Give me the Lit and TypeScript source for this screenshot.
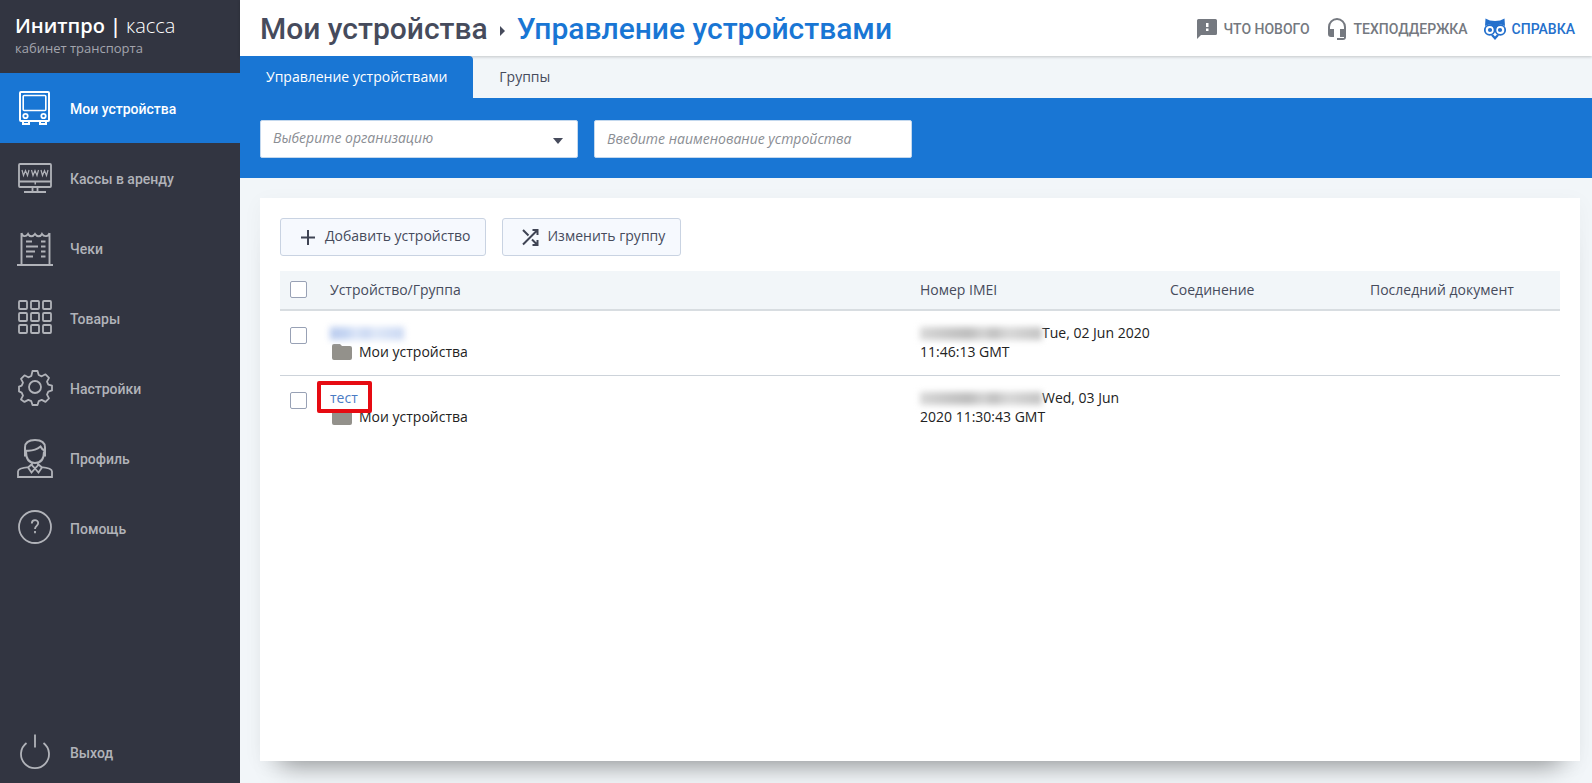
import { LitElement, html, css, svg } from "lit";
import { customElement } from "lit/decorators.js";
import { classMap } from "lit/directives/class-map.js";

const icons: Record<string, unknown> = {
  bus: svg`<rect x="4" y="4" width="29" height="29" rx="1" stroke-width="2"/><rect x="7.200" y="7.500" width="22.600" height="15" rx="1" stroke-width="1.600"/><circle cx="9.500" cy="28" r="2.200"/><circle cx="27.500" cy="28" r="2.200"/><path d="M7 33v3h6v-3M24 33v3h6v-3" stroke-width="2"/>`,
  rent: svg`<rect x="3" y="6" width="32" height="23" rx="1"/><path d="M3 23.500h32M16.500 29v4.500M21.500 29v4.500M8 34h22M18.500 25.500h1.500"/><path d="M6 12l1.500 5.500 2-5 2 5 1.500-5.500M15.500 12l1.500 5.500 2-5 2 5 1.500-5.500M25 12l1.500 5.500 2-5 2 5L32 12" stroke-width="1.200"/>`,
  check: svg`<path d="M1 37h36M5.500 37V5M33.500 37V5M5.500 5c1 4 4.500 4 6.500 1 1.500 3 5 3 7 0 2 3 5.500 3 7 0 2 3 6.500 3 7.500-1" stroke-width="1.900"/><path d="M10 13.500h6M25 13.500h4.500M10 18.500h12M25 18.500h4.500M10 23.500h9M25 23.500h4.500M10 28.500h7M25 28.500h4.500" stroke-width="1.800"/>`,
  goods: svg`${[3, 15, 27].map((x) => [3, 15, 27].map((y) => svg`<rect x=${x} y=${y} width="8" height="8" rx="1"/>`))}`,
  gear: svg`<circle cx="19" cy="19" r="6"/><path d="M16.500 3h5l1.200 4 3 1.300 3.800-2 3.500 3.500-2 3.800 1.300 3 3.700 1v4.800l-3.700 1.200-1.300 3 2 3.800-3.500 3.500-3.800-2-3 1.300-1.200 3.800h-5l-1.200-3.800-3-1.300-3.800 2L5 31.400l2-3.800-1.300-3L3 23.400v-4.800l2.700-1 1.300-3-2-3.800L8.500 7.300l3.800 2 3-1.300z" stroke-linejoin="round"/>`,
  profile: svg`<path d="M9 18.500V9.500Q9 2 19 2t10 7.500v9M9.500 12.500q9 1 15-4 1.500 3 4 4M10 13.500Q10 25 19 25t9-11.500" stroke-width="2"/><path d="M16 24.500v3l3 3 3-3v-3M15.500 26.500L12 29.500l3.500 5 3.500-4 3.500 4 3.500-5-3.500-3M13 29.200Q2 30 2 33.500V39h34v-5.500q0-3.500-11-4.300"/>`,
  help: svg`<circle cx="19" cy="19" r="16"/><path d="M15.800 15.500c0-4.600 6.400-4.200 6.400-.5 0 2.800-3.200 3-3.200 6M19 23v2.200" stroke-width="1.800"/>`,
  power: svg`<path d="M19 2.500v13M10.500 11a14 14 0 1 0 17 0"/>`,
};

const menu = [
  ["bus", "Мои устройства"],
  ["rent", "Кассы в аренду"],
  ["check", "Чеки"],
  ["goods", "Товары"],
  ["gear", "Настройки"],
  ["profile", "Профиль"],
  ["help", "Помощь"],
];

const devices = [
  { name: "", group: "Мои устройства", date: "Tue, 02 Jun 2020 11:46:13 GMT", marked: false },
  { name: "тест", group: "Мои устройства", date: "Wed, 03 Jun 2020 11:30:43 GMT", marked: true },
];

@customElement("side-menu")
export class SideMenu extends LitElement {
  static styles = css`
    :host { display: flex; flex-direction: column; background: #323541; color: #b1b3b9; }
    .brand { box-sizing: border-box; height: 73px; padding: 14px 15px; }
    .name { display: flex; gap: 5px; color: #fff; font: 300 20px/24px "Open Sans", sans-serif; }
    .name b { font-weight: 600; }
    .sub { font: 13px/20px "Open Sans", sans-serif; color: #a3a5ae; }
    nav { display: flex; flex-direction: column; flex: 1; }
    .item { display: flex; align-items: center; gap: 16px; height: 70px; padding-left: 16px; color: inherit; text-decoration: none; font: 500 14px/20px Roboto, sans-serif; }
    .item span { padding-top: 2px; }
    .active { background: #1976d4; color: #fff; }
    .exit { margin-top: auto; height: 62px; }
    svg { width: 38px; height: 40px; fill: none; stroke: currentColor; stroke-width: 1.8; }
  `;
  private item(icon: string, label: string, extra: Record<string, boolean>) {
    return html`<a href="#" class=${classMap({ item: true, ...extra })}>
      <svg viewBox="0 0 38 40" aria-hidden="true">${icons[icon]}</svg><span>${label}</span></a>`;
  }
  render() {
    return html`
      <div class="brand">
        <div class="name"><b>Инитпро</b><b>|</b><span>касса</span></div>
        <div class="sub">кабинет транспорта</div>
      </div>
      <nav>
        ${menu.map(([icon, label], i) => this.item(icon, label, { active: i === 0 }))}
        ${this.item("power", "Выход", { exit: true })}
      </nav>`;
  }
}

@customElement("device-table")
export class DeviceTable extends LitElement {
  static styles = css`
    :host { display: block; color: #222; font: 14px/19px "Open Sans", sans-serif; }
    table { width: 100%; border-collapse: separate; border-spacing: 0; table-layout: fixed; }
    th { height: 36px; padding: 0 10px 2px; text-align: left; font-weight: 400; color: #464b5c; background: #f2f6f9; border-bottom: 2px solid #d8dde1; }
    td { padding: 12px 10px 13px; vertical-align: top; }
    tr + tr td { border-top: 1px solid #cdd3da; }
    .c-check { width: 20px; }
    .c-imei { width: 230px; }
    .c-link, .c-doc { width: 180px; }
    input { appearance: none; display: block; box-sizing: border-box; width: 17px; height: 17px; margin: 0; border: 1px solid #98a1b5; border-radius: 2px; background: #fff; }
    td input { margin-top: 4px; }
    .title { position: relative; height: 19px; }
    a { color: #4a7bc4; text-decoration: none; }
    .mark { position: absolute; left: -13px; top: -7px; width: 47px; height: 24px; border: 4px solid #e60b12; border-radius: 2px; }
    .group { display: flex; align-items: center; gap: 7px; line-height: 20px; }
    .group svg { width: 20px; height: 16px; margin-left: 2px; fill: #93918b; }
    .hidden { display: inline-block; vertical-align: -2px; height: 13px; filter: blur(3px); }
    .hidden-name { width: 74px; background: linear-gradient(90deg, #b9cbee, #c6d6f3 24%, #dce6f8 34%, #cbd9f3 50%, #dfe8f8 60%, #cbd9f3); }
    .hidden-imei { width: 122px; background: linear-gradient(90deg, #d8d8d8, #c9c9c9 20%, #bdbdbd 40%, #d4d4d4 52%, #c0c0c0 60%, #d8d8d8 72%, #c4c4c4); }
  `;
  render() {
    return html`<table>
      <thead><tr>
        <th class="c-check"><input type="checkbox" aria-label="Выбрать все" /></th>
        <th>Устройство/Группа</th>
        <th class="c-imei">Номер IMEI</th>
        <th class="c-link">Соединение</th>
        <th class="c-doc">Последний документ</th>
      </tr></thead>
      <tbody>${devices.map((d) => html`<tr>
        <td><input type="checkbox" aria-label="Выбрать устройство" /></td>
        <td>
          <div class="title">
            <a href="#">${d.name || html`<span class="hidden hidden-name"></span>`}</a>
            ${d.marked ? html`<span class="mark"></span>` : ""}
          </div>
          <div class="group"><svg viewBox="0 0 20 16" aria-hidden="true"><path d="M2 0h6l2 2h8q2 0 2 2v10q0 2-2 2H2q-2 0-2-2V2q0-2 2-2z"/></svg>${d.group}</div>
        </td>
        <td><span class="hidden hidden-imei"></span>${d.date}</td>
        <td></td><td></td>
      </tr>`)}</tbody>
    </table>`;
  }
}

@customElement("app-root")
export class AppRoot extends LitElement {
  static styles = css`
    :host { display: grid; grid-template-columns: 240px minmax(0, 1fr); min-height: 100vh; background: #f2f6f9; font: 14px/20px "Open Sans", sans-serif; color: #464b5c; }
    main { display: flex; flex-direction: column; }
    header { display: flex; align-items: center; justify-content: space-between; box-sizing: border-box; height: 56px; padding: 2px 17px 0 20px; background: #fff; box-shadow: 0 1px 3px #0003; }
    h1 { display: flex; align-items: center; gap: 12px; margin: 0; font: 500 30px/36px Roboto, sans-serif; }
    h1 a { color: #1976d4; text-decoration: none; }
    .chevron { width: 5px; height: 10px; fill: #464b5c; margin-top: 4px; }
    .links { display: flex; gap: 16px; }
    .links a { display: flex; align-items: center; gap: 6px; color: #757980; text-decoration: none; font: 500 14px/24px Roboto, sans-serif; }
    .links a.help { color: #2470cc; }
    .links svg { width: 22px; height: 24px; fill: currentColor; }
    .tabs { position: relative; display: flex; height: 42px; }
    .tab { border: 0; padding: 0 26px; background: none; font: inherit; color: inherit; }
    .current { background: #1976d4; color: #fff; border-radius: 0 4px 0 0; }
    .filters { display: flex; gap: 16px; padding: 22px 20px 20px; background: #1976d4; }
    .field { box-sizing: border-box; flex: 0 1 318px; min-width: 0; height: 38px; padding: 0 12px 2px; border: 1px solid #c3d8ee; border-radius: 2px; background: #fff; color: #8a8d93; font: italic 14px/20px "Open Sans", sans-serif; appearance: none; }
    .field::placeholder { color: #8a8d93; opacity: 1; }
    .select { display: grid; flex: 0 1 318px; align-items: center; }
    .select > * { grid-area: 1 / 1; }
    .select svg { width: 10px; height: 6px; justify-self: end; margin: 3px 15px 0 0; fill: #464b5c; pointer-events: none; }
    .card { flex: 1; margin: 20px 12px 22px 20px; padding: 20px; background: #fff; box-shadow: 0 24px 24px -20px #0006, 0 4px 20px #0000000a; }
    .actions { display: flex; gap: 16px; margin-bottom: 15px; }
    .action { display: flex; align-items: center; gap: 7px; height: 38px; padding: 0 15px 2px 17px; border: 1px solid #c9d3e2; border-radius: 3px; background: #f6f9fe; color: #464b5c; font: inherit; }
    .action svg { width: 20px; height: 20px; margin-top: 2px; fill: none; stroke: #3f4454; stroke-width: 2; }
  `;
  render() {
    return html`
      <side-menu></side-menu>
      <main>
        <header>
          <h1>Мои устройства <svg class="chevron" viewBox="0 0 5 10"><path d="M0 0l5 5-5 5z"/></svg> <a href="#">Управление устройствами</a></h1>
          <div class="links">
            <a href="#"><svg viewBox="0 0 22 24"><path fill-rule="evenodd" d="M2.500 2h17q1.500 0 1.500 1.500v13q0 1.500-1.500 1.500H5l-4 4V3.500Q1 2 2.500 2zM10 6v4h2.500V6zM10 11.500v2.500h2.500v-2.500z"/></svg>ЧТО НОВОГО</a>
            <a href="#"><svg viewBox="0 0 22 24"><path d="M11 1a9 9 0 0 0-9 9v7q0 3 3 3h3v-8H4v-2a7 7 0 0 1 14 0v2h-4v8h4v1h-7v2h6q3 0 3-3V10a9 9 0 0 0-9-9z"/></svg>ТЕХПОДДЕРЖКА</a>
            <a href="#" class="help"><svg viewBox="0 0 22 24"><path d="M1.500 1.500q4 2.500 9.500 2.500t9.500-2.500l.5 7.500q-6-4-8.500 2L11 13l-1.500-2Q7 5 1 9z"/><g fill="none" stroke="currentColor" stroke-width="1.800"><circle cx="5.700" cy="13" r="4.900"/><circle cx="16.300" cy="13" r="4.900"/></g><circle cx="6" cy="13" r="2.100"/><circle cx="16" cy="13" r="2.100"/><path d="M7 18.500l2-1 2 2 2-2 2 1-4 4.500z"/></svg>СПРАВКА</a>
          </div>
        </header>
        <div class="tabs">
          <button class="tab current">Управление устройствами</button>
          <button class="tab">Группы</button>
        </div>
        <div class="filters">
          <div class="select">
            <select class="field" aria-label="Организация"><option>Выберите организацию</option></select>
            <svg viewBox="0 0 10 6"><path d="M0 0h10L5 6z"/></svg>
          </div>
          <input class="field" aria-label="Наименование устройства" placeholder="Введите наименование устройства" />
        </div>
        <section class="card">
          <div class="actions">
            <button class="action"><svg viewBox="0 0 20 20"><path d="M10 3v15M3 10.500h14"/></svg>Добавить устройство</button>
            <button class="action"><svg viewBox="0 0 20 20"><path d="M3 3l5.500 5.500M3 17.500L17 3.500M12 12.500l5 5M12.500 3H17.500v5M17.500 13v5H12.500"/></svg>Изменить группу</button>
          </div>
          <device-table></device-table>
        </section>
      </main>`;
  }
}
